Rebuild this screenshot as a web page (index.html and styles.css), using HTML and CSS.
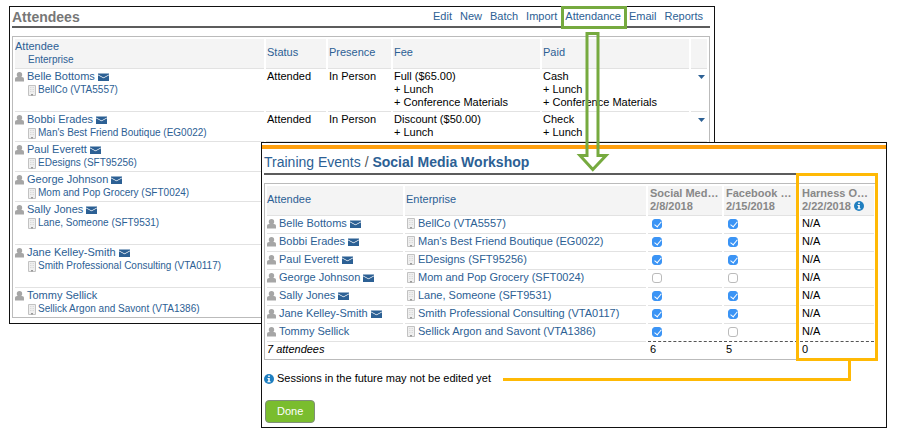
FILE: index.html
```html
<!DOCTYPE html>
<html lang="en">
<head>
<meta charset="utf-8">
<title>Attendees</title>
<link rel="stylesheet" href="styles.css">
</head>
<body>
<svg class="sprite" aria-hidden="true">
  <symbol id="person" viewBox="0 0 9 10"><circle cx="4.500" cy="2.700" r="2.700"/><path d="M0 9.500V7.200C0 5.700.8 5 2.200 5h4.600C8.200 5 9 5.700 9 7.200v2.300z"/></symbol>
  <symbol id="mail" viewBox="0 0 11 8"><path d="M0 0.500h11v1L5.500 4.500 0 1.500z"/><path d="M0 2.300l5.500 3L11 2.300V8H0z"/></symbol>
  <symbol id="building" viewBox="0 0 8 11"><path d="M.5.5h7v10h-7z" fill="#efefef" stroke="#c2c2c2"/><path d="M2 2.500h1M3.500 2.500h1M5 2.500h1M2 4.500h1M3.500 4.500h1M5 4.500h1M2 6.500h1M3.500 6.500h1M5 6.500h1" stroke="#dadada"/><path d="M3 9h2v1.500H3z" fill="#999"/></symbol>
  <symbol id="info" viewBox="0 0 10 10"><circle cx="5" cy="5" r="5" fill="#1f7fc0"/><path d="M4.200 1.500h1.600v1.500H4.200zM3.500 4h2.300v3.200h.8v1H3.400v-1h.8V5h-.7z" fill="#fff"/></symbol>
</svg>

<section class="panel back">
  <header class="bar">
    <h1>Attendees</h1>
    <nav>
      <a href="#">Edit</a>
      <a href="#">New</a>
      <a href="#">Batch</a>
      <a href="#">Import</a>
      <a href="#" class="marked">Attendance<svg class="arrow" viewBox="0 0 32 140" aria-hidden="true"><path d="M10 1.500h11v122h8L15.800 137.500 3 123.500h7z"/></svg></a>
      <a href="#">Email</a>
      <a href="#">Reports</a>
    </nav>
  </header>
  <table class="grid">
    <colgroup><col><col class="w-status"><col class="w-presence"><col class="w-fee"><col class="w-fee"><col class="w-menu"></colgroup>
    <thead>
      <tr>
        <th><a href="#">Attendee</a><a href="#" class="sub">Enterprise</a></th>
        <th><a href="#">Status</a></th>
        <th><a href="#">Presence</a></th>
        <th><a href="#">Fee</a></th>
        <th><a href="#">Paid</a></th>
        <th></th>
      </tr>
    </thead>
    <tbody>
      <tr class="tall">
        <td><div class="who"><svg class="i-person"><use href="#person"/></svg><a href="#">Belle Bottoms</a><svg class="i-mail"><use href="#mail"/></svg></div><div class="org"><svg class="i-building"><use href="#building"/></svg><a href="#">BellCo (VTA5557)</a></div></td>
        <td>Attended</td>
        <td>In Person</td>
        <td>Full ($65.00)<br>+ Lunch<br>+ Conference Materials</td>
        <td>Cash<br>+ Lunch<br>+ Conference Materials</td>
        <td><button class="menu" aria-label="Row menu"></button></td>
      </tr>
      <tr>
        <td><div class="who"><svg class="i-person"><use href="#person"/></svg><a href="#">Bobbi Erades</a><svg class="i-mail"><use href="#mail"/></svg></div><div class="org"><svg class="i-building"><use href="#building"/></svg><a href="#">Man's Best Friend Boutique (EG0022)</a></div></td>
        <td>Attended</td>
        <td>In Person</td>
        <td>Discount ($50.00)<br>+ Lunch</td>
        <td>Check<br>+ Lunch</td>
        <td><button class="menu" aria-label="Row menu"></button></td>
      </tr>
      <tr>
        <td><div class="who"><svg class="i-person"><use href="#person"/></svg><a href="#">Paul Everett</a><svg class="i-mail"><use href="#mail"/></svg></div><div class="org"><svg class="i-building"><use href="#building"/></svg><a href="#">EDesigns (SFT95256)</a></div></td>
        <td colspan="5"></td>
      </tr>
      <tr>
        <td><div class="who"><svg class="i-person"><use href="#person"/></svg><a href="#">George Johnson</a><svg class="i-mail"><use href="#mail"/></svg></div><div class="org"><svg class="i-building"><use href="#building"/></svg><a href="#">Mom and Pop Grocery (SFT0024)</a></div></td>
        <td colspan="5"></td>
      </tr>
      <tr class="tall">
        <td><div class="who"><svg class="i-person"><use href="#person"/></svg><a href="#">Sally Jones</a><svg class="i-mail"><use href="#mail"/></svg></div><div class="org"><svg class="i-building"><use href="#building"/></svg><a href="#">Lane, Someone (SFT9531)</a></div></td>
        <td colspan="5"></td>
      </tr>
      <tr class="tall">
        <td><div class="who"><svg class="i-person"><use href="#person"/></svg><a href="#">Jane Kelley-Smith</a><svg class="i-mail"><use href="#mail"/></svg></div><div class="org"><svg class="i-building"><use href="#building"/></svg><a href="#">Smith Professional Consulting (VTA0117)</a></div></td>
        <td colspan="5"></td>
      </tr>
      <tr>
        <td><div class="who"><svg class="i-person"><use href="#person"/></svg><a href="#">Tommy Sellick</a></div><div class="org"><svg class="i-building"><use href="#building"/></svg><a href="#">Sellick Argon and Savont (VTA1386)</a></div></td>
        <td colspan="5"></td>
      </tr>
    </tbody>
  </table>
</section>

<section class="panel front">
  <h2 class="crumbs"><a href="#">Training Events</a> / <a href="#" class="current">Social Media Workshop</a></h2>
  <div class="sheet">
    <table class="grid sessions">
      <colgroup><col class="w-name"><col><col class="w-session"><col class="w-session"><col class="w-session"></colgroup>
      <thead>
        <tr>
          <th><a href="#">Attendee</a></th>
          <th><a href="#">Enterprise</a></th>
          <th class="session" id="s1">Social Med…<br>2/8/2018</th>
          <th class="session" id="s2">Facebook …<br>2/15/2018</th>
          <th class="session">Harness O…<br>2/22/2018 <svg class="i-info"><use href="#info"/></svg></th>
        </tr>
      </thead>
      <tbody>
        <tr>
          <td><div class="who"><svg class="i-person"><use href="#person"/></svg><a href="#" id="a1">Belle Bottoms</a><svg class="i-mail"><use href="#mail"/></svg></div></td>
          <td><div class="who"><svg class="i-building"><use href="#building"/></svg><a href="#">BellCo (VTA5557)</a></div></td>
          <td><input type="checkbox" aria-labelledby="a1 s1" checked></td>
          <td><input type="checkbox" aria-labelledby="a1 s2" checked></td>
          <td>N/A</td>
        </tr>
        <tr>
          <td><div class="who"><svg class="i-person"><use href="#person"/></svg><a href="#" id="a2">Bobbi Erades</a><svg class="i-mail"><use href="#mail"/></svg></div></td>
          <td><div class="who"><svg class="i-building"><use href="#building"/></svg><a href="#">Man's Best Friend Boutique (EG0022)</a></div></td>
          <td><input type="checkbox" aria-labelledby="a2 s1" checked></td>
          <td><input type="checkbox" aria-labelledby="a2 s2" checked></td>
          <td>N/A</td>
        </tr>
        <tr>
          <td><div class="who"><svg class="i-person"><use href="#person"/></svg><a href="#" id="a3">Paul Everett</a><svg class="i-mail"><use href="#mail"/></svg></div></td>
          <td><div class="who"><svg class="i-building"><use href="#building"/></svg><a href="#">EDesigns (SFT95256)</a></div></td>
          <td><input type="checkbox" aria-labelledby="a3 s1" checked></td>
          <td><input type="checkbox" aria-labelledby="a3 s2" checked></td>
          <td>N/A</td>
        </tr>
        <tr>
          <td><div class="who"><svg class="i-person"><use href="#person"/></svg><a href="#" id="a4">George Johnson</a><svg class="i-mail"><use href="#mail"/></svg></div></td>
          <td><div class="who"><svg class="i-building"><use href="#building"/></svg><a href="#">Mom and Pop Grocery (SFT0024)</a></div></td>
          <td><input type="checkbox" aria-labelledby="a4 s1"></td>
          <td><input type="checkbox" aria-labelledby="a4 s2"></td>
          <td>N/A</td>
        </tr>
        <tr>
          <td><div class="who"><svg class="i-person"><use href="#person"/></svg><a href="#" id="a5">Sally Jones</a><svg class="i-mail"><use href="#mail"/></svg></div></td>
          <td><div class="who"><svg class="i-building"><use href="#building"/></svg><a href="#">Lane, Someone (SFT9531)</a></div></td>
          <td><input type="checkbox" aria-labelledby="a5 s1" checked></td>
          <td><input type="checkbox" aria-labelledby="a5 s2" checked></td>
          <td>N/A</td>
        </tr>
        <tr>
          <td><div class="who"><svg class="i-person"><use href="#person"/></svg><a href="#" id="a6">Jane Kelley-Smith</a><svg class="i-mail"><use href="#mail"/></svg></div></td>
          <td><div class="who"><svg class="i-building"><use href="#building"/></svg><a href="#">Smith Professional Consulting (VTA0117)</a></div></td>
          <td><input type="checkbox" aria-labelledby="a6 s1" checked></td>
          <td><input type="checkbox" aria-labelledby="a6 s2" checked></td>
          <td>N/A</td>
        </tr>
        <tr>
          <td><div class="who"><svg class="i-person"><use href="#person"/></svg><a href="#" id="a7">Tommy Sellick</a></div></td>
          <td><div class="who"><svg class="i-building"><use href="#building"/></svg><a href="#">Sellick Argon and Savont (VTA1386)</a></div></td>
          <td><input type="checkbox" aria-labelledby="a7 s1" checked></td>
          <td><input type="checkbox" aria-labelledby="a7 s2"></td>
          <td>N/A</td>
        </tr>
      </tbody>
      <tfoot>
        <tr><td colspan="2" class="count">7 attendees</td><td>6</td><td>5</td><td>0</td></tr>
      </tfoot>
    </table>
    <div class="highlight"></div>
  </div>
  <div class="note">
    <p><svg class="i-info"><use href="#info"/></svg>Sessions in the future may not be edited yet</p>
    <div class="connector"></div>
  </div>
  <button class="done">Done</button>
</section>
</body>
</html>
```
FILE: styles.css
```css
* { box-sizing: border-box; }

body {
  margin: 0;
  background: #fff;
  color: #000;
  font: 11px/13px "Liberation Sans", Arial, sans-serif;
}

a { color: #2c6094; text-decoration: none; }
svg { flex: none; overflow: visible; }
.sprite { position: absolute; width: 0; height: 0; }

.i-person { width: 9px; height: 10px; fill: #a6a6a6; }
.i-mail { width: 11px; height: 8px; fill: #2c6094; }
.i-building { width: 8px; height: 11px; }
.i-info { width: 10px; height: 10px; vertical-align: -1px; }

.panel { border: 1px solid #111; background: #fff; }

.back {
  margin: 6px 205px 0 9px;
  padding: 0 4px 5px 2px;
}

.front {
  position: absolute;
  z-index: 1;
  top: 142px;
  left: 261px;
  right: 33px;
  padding: 2px 0 4px;
}

.bar {
  display: flex;
  align-items: center;
  justify-content: space-between;
  height: 21px;
  margin-bottom: 8px;
  padding-right: 7px;
  border-bottom: 2px solid #5c5c5c;
}

h1, h2 { margin: 0; font-size: 14px; line-height: 18px; }
h1 { color: #777; }

nav { display: flex; gap: 8px; }

.marked { position: relative; z-index: 2; }
.marked::before {
  content: "";
  position: absolute;
  inset: -4px -6px -6px -4px;
  border: 3px solid #76aa3f;
}

.arrow {
  position: absolute;
  top: 22px;
  left: 12px;
  width: 32px;
  height: 140px;
  fill: none;
  stroke: #76aa3f;
  stroke-width: 3px;
  pointer-events: none;
}

.grid {
  width: 100%;
  padding-top: 2px;
  table-layout: fixed;
  border: 1px solid #bbb;
  border-collapse: separate;
  border-spacing: 2px 0;
}

.grid th {
  height: 29px;
  padding: 0 0 2px 1px;
  background: #f4f4f4;
  font-weight: normal;
  text-align: left;
  vertical-align: middle;
}
.grid td {
  height: 30px;
  padding: 1px 0 0 1px;
  border-top: 1px solid #e2e2e2;
  vertical-align: top;
}
.grid th:first-child, .grid td:first-child { padding-left: 0; }
.grid .tall td { height: 43px; }

.w-status { width: 60px; }
.w-presence { width: 63px; }
.w-fee { width: 147px; }
.w-menu { width: 16px; }
.w-name { width: 136px; }
.w-session { width: 74px; }

.sub { display: block; padding-left: 13px; font-size: 10px; }

.who { display: flex; align-items: center; gap: 3px; white-space: nowrap; }
.org {
  display: flex;
  align-items: center;
  gap: 2px;
  padding-left: 13px;
  font-size: 10px;
  line-height: 14px;
  white-space: nowrap;
}

.menu {
  display: block;
  width: 7px;
  height: 4px;
  margin: 5px auto 0 6px;
  padding: 0;
  border: 0;
  background: #2c6094;
  clip-path: polygon(0 0, 100% 0, 50% 100%);
}

.crumbs {
  padding: 2px 9px 0 2px;
  height: 30px;
  border-top: 4px solid #ff9f0d;
  color: #555;
  font-weight: normal;
  line-height: 22px;
}
.crumbs::after { content: ""; display: block; height: 2px; background: #5c5c5c; }
.current { font-weight: bold; }

.sheet {
  position: relative;
  margin: 0 9px 0 2px;
  padding-top: 8px;
}
.sessions td { height: 18px; }
.sessions .session { color: #888; font-weight: bold; white-space: nowrap; }
.sessions .session, .sessions td { padding-left: 2px; }
.sessions tfoot td + td { border-top: 1px dashed #555; }
.count { font-style: italic; }

input[type="checkbox"] {
  appearance: none;
  display: block;
  width: 10px;
  height: 10px;
  margin: 2px 0 0 2px;
  border: 1px solid #bbb;
  border-radius: 3px;
  background: #fff;
}
input[type="checkbox"]:checked { border-color: #3b94f5; background: #3b94f5; }
input[type="checkbox"]:checked::before {
  content: "";
  display: block;
  width: 3px;
  height: 6px;
  margin: 0 0 0 3px;
  border: solid #fff;
  border-width: 0 1px 1px 0;
  transform: rotate(40deg);
}

.highlight {
  position: absolute;
  top: -2px;
  right: -1px;
  bottom: -1px;
  width: 82px;
  border: 3px solid #ffb905;
  pointer-events: none;
}

.note { display: flex; gap: 12px; padding: 0 35px 0 2px; }
.note p { display: flex; align-items: center; gap: 3px; margin: 12px 0 0; }
.connector {
  flex: 1;
  height: 21px;
  border: solid #ffb905;
  border-width: 0 3px 3px 0;
}

.done {
  display: block;
  margin: 15px 0 0 3px;
  padding: 4px 11px;
  border: 1px solid #7f8f78;
  border-radius: 4px;
  background: #7abd2e;
  color: #fff;
  font: inherit;
}
```
